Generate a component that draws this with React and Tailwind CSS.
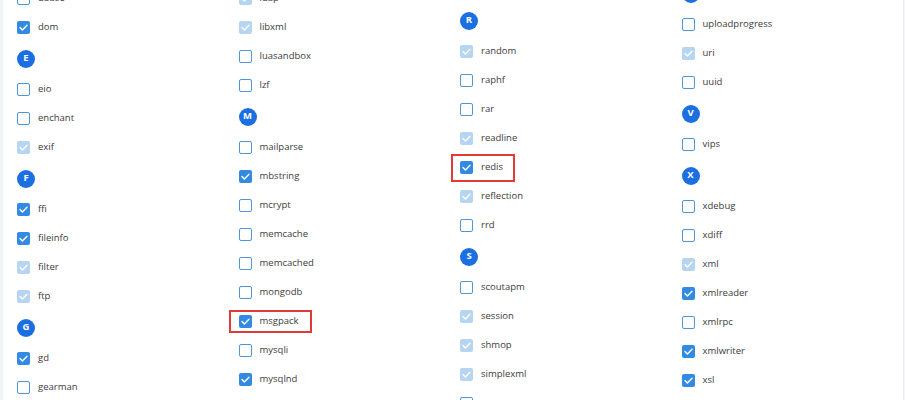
import React from 'react'

const columns = [
    {
        offset: 'mt-[-16px]',
        rows: [
            ['dbase', 'off'], ['dom', 'on'], 'E', ['eio', 'off'], ['enchant', 'off'], ['exif', 'dis'],
            'F', ['ffi', 'on'], ['fileinfo', 'on'], ['filter', 'dis'], ['ftp', 'dis'],
            'G', ['gd', 'on'], ['gearman', 'off'],
        ],
    },
    {
        offset: 'mt-[-16px]',
        rows: [
            ['ldap', 'dis'], ['libxml', 'dis'], ['luasandbox', 'off'], ['lzf', 'off'],
            'M', ['mailparse', 'off'], ['mbstring', 'on'], ['mcrypt', 'off'], ['memcache', 'off'],
            ['memcached', 'off'], ['mongodb', 'off'],
            ['msgpack', 'on', 'left-[-10px] right-[-13px] top-[-4px] bottom-[-4px]'],
            ['mysqli', 'off'], ['mysqlnd', 'on'],
        ],
    },
    {
        offset: 'mt-[-25px]',
        rows: [
            ['pspell', 'off'], 'R', ['random', 'dis'], ['raphf', 'off'], ['rar', 'off'], ['readline', 'dis'],
            ['redis', 'on', 'left-[-9px] right-[-12px] top-[-6px] bottom-[-7px]'],
            ['reflection', 'dis'], ['rrd', 'off'],
            'S', ['scoutapm', 'off'], ['session', 'dis'], ['shmop', 'dis'], ['simplexml', 'dis'], ['snmp', 'off'],
        ],
    },
    {
        offset: 'mt-[-23px]',
        rows: [
            'U', ['uploadprogress', 'off'], ['uri', 'dis'], ['uuid', 'off'], 'V', ['vips', 'off'],
            'X', ['xdebug', 'off'], ['xdiff', 'off'], ['xml', 'dis'], ['xmlreader', 'on'],
            ['xmlrpc', 'off'], ['xmlwriter', 'on'], ['xsl', 'on'], ['zip', 'dis'],
        ],
    },
]

function Box({ state }) {
    if (state === 'off') {
        return <span className="w-[13px] h-[13px] shrink-0 rounded-[2px] border-[1.5px] border-[#4f95dc] bg-white" />
    }
    const fill = state === 'on' ? 'bg-[#338ae2]' : 'bg-[#b6d5f3]'
    return (
        <span className={`w-[13px] h-[13px] shrink-0 rounded-[2px] flex items-center justify-center ${fill}`}>
            <svg width="11" height="11" viewBox="0 0 11 11" fill="none">
                <path d="M2 5.6 L4.4 8 L9 3.2" stroke="white" strokeWidth="1.4" strokeLinecap="round" strokeLinejoin="round" />
            </svg>
        </span>
    )
}

function Letter({ char }) {
    return (
        <div className="h-[33px] shrink-0 flex items-center">
            <span className="w-[18px] h-[18px] rounded-full bg-[#1b6fe0] text-white text-[9.5px] font-bold flex items-center justify-center">
                {char}
            </span>
        </div>
    )
}

function Item({ name, state, marked }) {
    return (
        <div className="h-[29px] shrink-0 flex items-center">
            <div className="relative flex items-center gap-[8px]">
                {marked && <span className={`absolute border-2 border-[#e23b36] ${marked}`} />}
                <Box state={state} />
                <span className="text-[9.5px] text-[#3c3c3c]">{name}</span>
            </div>
        </div>
    )
}

export default function App() {
    return (
        <div className="w-[905px] h-[400px] overflow-hidden bg-white flex" style={{ fontFamily: '"Open Sans", "Noto Sans", sans-serif' }}>
            <div className="w-[3px] bg-[#f2f3f4] shrink-0" />
            <div className="flex-1 flex pl-[14px]">
                {columns.map((col, i) => (
                    <div key={i} className={`w-[221.5px] shrink-0 flex flex-col ${col.offset}`}>
                        {col.rows.map((r, j) =>
                            typeof r === 'string'
                                ? <Letter key={j} char={r} />
                                : <Item key={j} name={r[0]} state={r[1]} marked={r[2]} />
                        )}
                    </div>
                ))}
            </div>
            <div className="w-[1px] bg-[#ececee] shrink-0" />
            <div className="w-[5px] bg-[#f6f6f8] shrink-0" />
        </div>
    )
}
